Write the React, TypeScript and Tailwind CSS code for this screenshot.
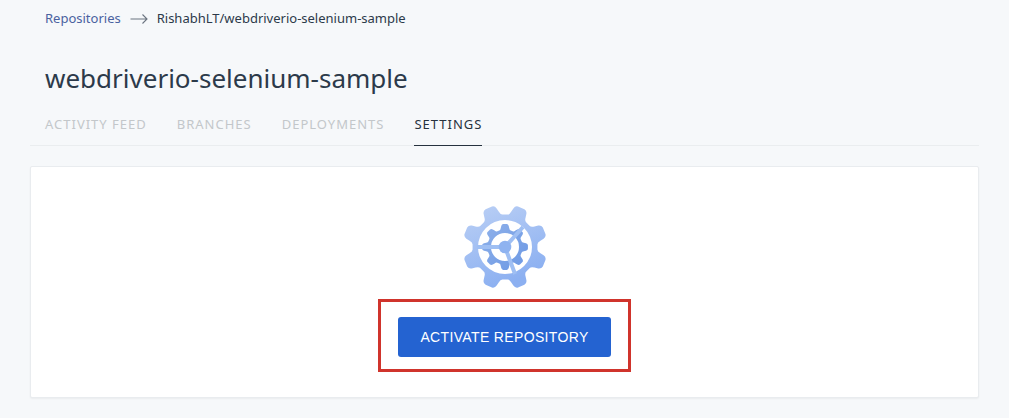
import React from "react";

const CENTER = 40;

function gearPath(teeth: number, outer: number, root: number, hole: number, offset: number, tip: number, base: number) {
  const point = (r: number, deg: number) => {
    const a = (deg * Math.PI) / 180;
    return `${(CENTER + r * Math.cos(a)).toFixed(2)} ${(CENTER + r * Math.sin(a)).toFixed(2)}`;
  };
  const depth = outer - root;
  const high = outer - depth * 0.3;
  const low = root + depth * 0.35;
  const edge = (r: number) => tip + ((outer - r) / depth) * (base - tip);
  let d = "";
  for (let i = 0; i < teeth; i++) {
    const mid = offset + (i * 360) / teeth;
    const next = mid + 360 / teeth;
    d += `${i === 0 ? "M" : "L"}${point(high, mid - edge(high))}`;
    d += `Q${point(outer, mid - tip)} ${point(outer, mid - tip * 0.55)}`;
    d += `L${point(outer, mid + tip * 0.55)}`;
    d += `Q${point(outer, mid + tip)} ${point(high, mid + edge(high))}`;
    d += `L${point(low, mid + edge(low))}`;
    d += `Q${point(root, mid + base)} ${point(root, mid + base + 4)}`;
    d += `L${point(root, next - base - 4)}`;
    d += `Q${point(root, next - base)} ${point(low, next - edge(low))}`;
  }
  d += `ZM${CENTER + hole} ${CENTER}A${hole} ${hole} 0 1 0 ${CENTER - hole} ${CENTER}A${hole} ${hole} 0 1 0 ${CENTER + hole} ${CENTER}Z`;
  return d;
}

function GearIcon() {
  return (
    <svg viewBox="0 0 80 80" className="size-20 overflow-visible" aria-hidden="true">
      <defs>
        <linearGradient id="outer-gear" x1="0" y1="0" x2="0.4" y2="1">
          <stop offset="0" stopColor="#bbd0f5" />
          <stop offset="1" stopColor="#8cb0f1" />
        </linearGradient>
        <linearGradient id="inner-gear" x1="0" y1="0" x2="1" y2="1">
          <stop offset="0" stopColor="#8fb1ea" />
          <stop offset="1" stopColor="#6c98e4" />
        </linearGradient>
      </defs>
      <path d={gearPath(8, 42.5, 32.5, 27, 22.5, 8.5, 14.5)} fill="url(#outer-gear)" fillRule="evenodd" />
      <path d={gearPath(8, 23, 17.5, 14, 0, 8, 15)} fill="url(#inner-gear)" fillRule="evenodd" />
      <path d="M40 40H12M40 40L58 20M40 40L50 67" stroke="#9fbff3" strokeWidth="4" />
      <circle cx="40" cy="40" r="6.3" fill="#8fb3f0" />
    </svg>
  );
}

const tabs = ["Activity feed", "Branches", "Deployments", "Settings"];

export default function App() {
  return (
    <div className="bg-white pr-[3px] pb-[2px] font-['Noto_Sans',sans-serif]">
      <main className="bg-[#f6f8fa] px-[30px] pt-2 pb-5 text-[#2c3a4a]">
        <nav aria-label="Breadcrumb" className="flex h-[22px] items-center px-[15px] text-[13px]">
          <a href="#repositories" className="text-[#4a62a0]">Repositories</a>
          <svg viewBox="0 0 18 12" className="mx-[9px] h-3 w-[18px]" fill="none" stroke="#6b7480" strokeWidth="1.1" aria-hidden="true">
            <path d="M0.5 6H17M12.5 1.5L17 6L12.5 10.5" />
          </svg>
          <span>RishabhLT/webdriverio-selenium-sample</span>
        </nav>
        <h1 className="mt-[30px] px-[15px] text-[26px] leading-9">webdriverio-selenium-sample</h1>
        <nav aria-label="Repository" className="mt-2 flex gap-[30px] border-b border-[#eaedef] px-[15px]">
          {tabs.map((tab) => (
            <a
              key={tab}
              href={`#${tab.toLowerCase().replace(" ", "-")}`}
              aria-current={tab === "Settings" ? "page" : undefined}
              className={
                tab === "Settings"
                  ? "-mb-px border-b border-[#26323e] text-[13px] leading-[41px] tracking-[1px] uppercase text-[#26323e]"
                  : "text-[13px] leading-[41px] tracking-[1px] uppercase text-[#c3c7ca]"
              }
            >
              {tab}
            </a>
          ))}
        </nav>
        <section className="mt-5 flex flex-col items-center rounded-xs border border-[#e9ecef] bg-white pt-10 pb-[25px] shadow-xs">
          <GearIcon />
          <div className="mt-3 border-3 border-[#d0342c] px-[17px] pt-[15px] pb-3">
            <button type="button" className="h-10 rounded-[3px] bg-[#2463d1] px-[22px] font-['Liberation_Sans',sans-serif] text-sm tracking-wide uppercase text-white">
              Activate repository
            </button>
          </div>
        </section>
      </main>
    </div>
  );
}
